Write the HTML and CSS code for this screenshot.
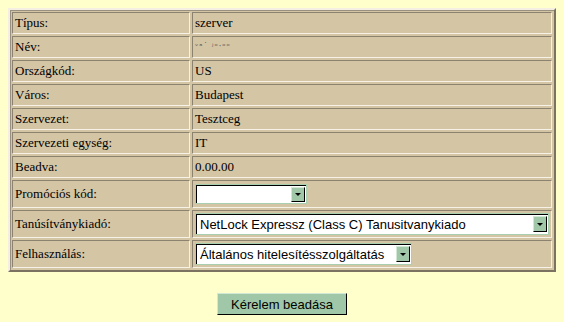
FILE: index.html
```html
<!DOCTYPE html>
<html lang="hu">
<head>
    <meta charset="UTF-8">
    <title>Kérelem</title>
    <link rel="stylesheet" href="styles.css">
</head>
<body>
    <form class="request-form">
        <!-- Request details -->
        <table class="details">
            <tr><td class="label">Típus:</td><td>szerver</td></tr>
            <tr><td class="label">Név:</td><td><span class="masked">ᵛᵃ˙ ʲᵒ·ᵒᵒ</span></td></tr>
            <tr><td class="label">Országkód:</td><td>US</td></tr>
            <tr><td class="label">Város:</td><td>Budapest</td></tr>
            <tr><td class="label">Szervezet:</td><td>Tesztceg</td></tr>
            <tr><td class="label">Szervezeti egység:</td><td>IT</td></tr>
            <tr><td class="label">Beadva:</td><td>0.00.00</td></tr>
            <tr class="field-row">
                <td class="label">Promóciós kód:</td>
                <td>
                    <span class="select select-short">
                        <select><option></option></select>
                        <span class="arrow"></span>
                    </span>
                </td>
            </tr>
            <tr class="field-row">
                <td class="label">Tanúsítványkiadó:</td>
                <td>
                    <span class="select select-wide">
                        <select><option>NetLock Expressz (Class C) Tanusitvanykiado</option></select>
                        <span class="arrow"></span>
                    </span>
                </td>
            </tr>
            <tr class="field-row">
                <td class="label">Felhasználás:</td>
                <td>
                    <span class="select select-mid">
                        <select><option>Általános hitelesítésszolgáltatás</option></select>
                        <span class="arrow"></span>
                    </span>
                </td>
            </tr>
        </table>

        <div class="actions">
            <button type="submit" class="submit-button">Kérelem beadása</button>
        </div>
    </form>
</body>
</html>
```

FILE: styles.css
```css
/* Page */
body {
    margin: 8px;
    background: #ffffcc;
    font-family: "Liberation Serif", "Times New Roman", serif;
    font-size: 13px;
    color: #000;
}

/* Details table */
.details {
    width: 548px;
    background: #d4c5a5;
    border: 2px solid;
    border-color: #f4efe2 #7b7262 #7b7262 #f4efe2;
    border-spacing: 2px;
    box-shadow: inset 1px 1px 0 #9a9080;
}

.details td {
    border: 1px solid;
    border-color: #8b8270 #f6f2e8 #f6f2e8 #8b8270;
    padding: 3px 2px;
    line-height: 14px;
    height: 14px;
}

.details .label {
    width: 173px;
}

.details .field-row td {
    padding: 2px 2px;
    height: 22px;
}

.masked {
    font-family: "DejaVu Sans", sans-serif;
    font-size: 8px;
    line-height: 14px;
    vertical-align: top;
    color: #555;
    letter-spacing: 1px;
}

/* Dropdowns */
.select {
    display: flex;
    align-items: center;
    box-sizing: border-box;
    background: #fff;
    border: 1px solid #a8d0b0;
    box-shadow: inset 1px 1px 0 #000;
    padding: 1px 1px 1px 2px;
}

.select select {
    appearance: none;
    -webkit-appearance: none;
    border: none;
    background: transparent;
    font-family: "Liberation Sans", Arial, sans-serif;
    font-size: 13px;
    padding: 0 2px;
    margin: 0;
    flex: 1;
    min-width: 0;
    height: 16px;
    color: #000;
    outline: none;
}

.select-short { width: 112px; height: 20px; }
.select-wide { width: 354px; height: 22px; }
.select-mid { width: 217px; height: 22px; }

.arrow {
    width: 14px;
    height: 16px;
    box-sizing: border-box;
    background: #a0c8a8;
    border: 1px solid;
    border-color: #d0e8d4 #000 #000 #d0e8d4;
    display: flex;
    align-items: center;
    justify-content: center;
}

.select-short .arrow {
    height: 15px;
}

.arrow::after {
    content: "";
    border-left: 3px solid transparent;
    border-right: 3px solid transparent;
    border-top: 3px solid #000;
}

/* Submit */
.actions {
    text-align: center;
    margin-top: 21px;
}

.submit-button {
    width: 130px;
    height: 22px;
    background: #a0c8a8;
    border: 1px solid;
    border-color: #d0e8d4 #000 #000 #d0e8d4;
    font-family: "Liberation Sans", Arial, sans-serif;
    font-size: 13px;
    color: #000;
    padding: 0;
}
```
